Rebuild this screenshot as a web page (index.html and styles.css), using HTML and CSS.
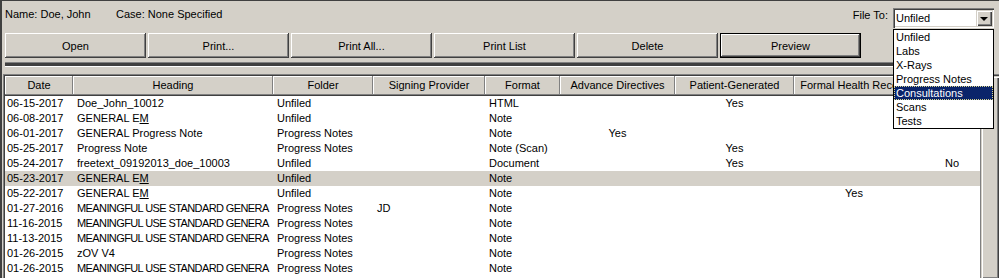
FILE: index.html
```html
<!DOCTYPE html>
<html lang="en">
<head>
    <meta charset="UTF-8">
    <title>Documents</title>
    <link rel="stylesheet" href="styles.css">
</head>
<body>
    <div class="window">
        <div class="info">
            <span class="name">Name: Doe, John</span>
            <span class="case">Case: None Specified</span>
            <div class="file_to">
                <span class="file_label">File To:</span>
                <div class="combo">
                    <span class="combo_value">Unfiled</span>
                    <span class="combo_arrow"><span class="tri"></span></span>
                    <ul class="combo_list">
                        <li>Unfiled</li>
                        <li>Labs</li>
                        <li>X-Rays</li>
                        <li>Progress Notes</li>
                        <li class="picked">Consultations</li>
                        <li>Scans</li>
                        <li>Tests</li>
                    </ul>
                </div>
            </div>
        </div>

        <div class="toolbar">
            <button class="btn">Open</button>
            <button class="btn">Print...</button>
            <button class="btn">Print All...</button>
            <button class="btn">Print List</button>
            <button class="btn">Delete</button>
            <button class="btn default">Preview</button>
        </div>

        <div class="separator"></div>

        <div class="list">
            <div class="grid">
                <div class="row head">
                    <span>Date</span><span>Heading</span><span>Folder</span><span>Signing Provider</span><span>Format</span><span>Advance Directives</span><span>Patient-Generated</span><span>Formal Health Record</span><span></span>
                </div>
                <div class="row">
                    <span>06-15-2017</span><span>Doe_John_10012</span><span>Unfiled</span><span></span><span>HTML</span><span></span><span class="c">Yes</span><span></span><span></span>
                </div>
                <div class="row">
                    <span>06-08-2017</span><span>GENERAL E<u>M</u></span><span>Unfiled</span><span></span><span>Note</span><span></span><span></span><span></span><span></span>
                </div>
                <div class="row">
                    <span>06-01-2017</span><span>GENERAL Progress Note</span><span>Progress Notes</span><span></span><span>Note</span><span class="c">Yes</span><span></span><span></span><span></span>
                </div>
                <div class="row">
                    <span>05-25-2017</span><span>Progress Note</span><span>Progress Notes</span><span></span><span>Note (Scan)</span><span></span><span class="c">Yes</span><span></span><span></span>
                </div>
                <div class="row">
                    <span>05-24-2017</span><span>freetext_09192013_doe_10003</span><span>Unfiled</span><span></span><span>Document</span><span></span><span class="c">Yes</span><span></span><span class="c">No</span>
                </div>
                <div class="row selected">
                    <span>05-23-2017</span><span>GENERAL E<u>M</u></span><span>Unfiled</span><span></span><span>Note</span><span></span><span></span><span></span><span></span>
                </div>
                <div class="row">
                    <span>05-22-2017</span><span>GENERAL E<u>M</u></span><span>Unfiled</span><span></span><span>Note</span><span></span><span></span><span class="c">Yes</span><span></span>
                </div>
                <div class="row">
                    <span>01-27-2016</span><span class="tight">MEANINGFUL USE STANDARD GENERA</span><span>Progress Notes</span><span>JD</span><span>Note</span><span></span><span></span><span></span><span></span>
                </div>
                <div class="row">
                    <span>11-16-2015</span><span class="tight">MEANINGFUL USE STANDARD GENERA</span><span>Progress Notes</span><span></span><span>Note</span><span></span><span></span><span></span><span></span>
                </div>
                <div class="row">
                    <span>11-13-2015</span><span class="tight">MEANINGFUL USE STANDARD GENERA</span><span>Progress Notes</span><span></span><span>Note</span><span></span><span></span><span></span><span></span>
                </div>
                <div class="row">
                    <span>01-26-2015</span><span>zOV V4</span><span>Progress Notes</span><span></span><span>Note</span><span></span><span></span><span></span><span></span>
                </div>
                <div class="row">
                    <span>01-26-2015</span><span class="tight">MEANINGFUL USE STANDARD GENERA</span><span>Progress Notes</span><span></span><span>Note</span><span></span><span></span><span></span><span></span>
                </div>
            </div>
            <div class="scrollbar"><div class="thumb"></div></div>
        </div>
    </div>
</body>
</html>
```

FILE: styles.css
```css
/* classic windows look: gray face, 3D edges drawn with inset shadows */
*{
    box-sizing: border-box;
}
html, body{
    margin: 0;
    height: 100%;
    overflow: hidden;
}
body{
    background-color: #d4d0c8;
    font-family: "Liberation Sans", Arial, sans-serif;
    font-size: 11px;
    color: #000;
}
.window{
    height: 100%;
    border-top: 1px solid #404040;
    border-left: 2px solid #404040;
}

/* top line: patient name, case and the File To combo */
.info{
    display: flex;
    align-items: flex-start;
    height: 31px;
    padding: 7px 0 0 3px;
    line-height: 13px;
}
.name{
    width: 111px;
}
.file_to{
    display: flex;
    align-items: flex-start;
    margin-left: auto;
    margin-right: 5px;
}
.file_label{
    margin: 1px 5px 0 0;
}
.combo{
    position: relative;
    display: flex;
    align-items: center;
    width: 101px;
    height: 20px;
    padding: 2px;
    background-color: #fff;
    box-shadow: inset 1px 1px #808080, inset 2px 2px #404040, inset -1px -1px #fff, inset -2px -2px #d4d0c8;
}
.combo_value{
    flex: 1;
    padding-left: 1px;
}
.combo_arrow{
    display: flex;
    align-items: center;
    justify-content: center;
    width: 16px;
    height: 16px;
    background-color: #d4d0c8;
    box-shadow: inset 1px 1px #d4d0c8, inset 2px 2px #fff, inset -1px -1px #404040, inset -2px -2px #808080;
}
.tri{
    width: 0;
    height: 0;
    border-left: 4px solid transparent;
    border-right: 4px solid transparent;
    border-top: 4px solid #000;
    margin-top: 1px;
}
.combo_list{
    /* the open drop-down lies over the buttons and the list */
    position: absolute;
    top: calc(100% + 1px);
    left: 0;
    width: 101px;
    margin: 0;
    padding: 0;
    list-style: none;
    background-color: #fff;
    border: 1px solid #000;
    z-index: 5;
}
.combo_list li{
    height: 14px;
    line-height: 14px;
    padding-left: 2px;
    white-space: nowrap;
}
.combo_list .picked{
    background-color: #0a246a;
    color: #fff;
    outline: 1px dotted #d8d48c;
    outline-offset: -1px;
}

/* button row */
.toolbar{
    display: flex;
    gap: 2px;
    margin-top: 1px;
    padding-left: 3px;
}
.btn{
    width: 141px;
    height: 25px;
    padding: 0;
    border: none;
    background-color: #d4d0c8;
    font-family: inherit;
    font-size: 11px;
    color: #000;
    box-shadow: inset -1px -1px #404040, inset 1px 1px #fff, inset -2px -2px #808080, inset 2px 2px #d4d0c8;
}
.btn.default{
    box-shadow: inset 0 0 0 1px #000, inset -2px -2px #404040, inset 2px 2px #fff, inset -3px -3px #808080;
}

.separator{
    height: 5px;
    margin: 4px 6px 0 3px;
    background-color: #404040;
    border-top: 1px solid #808080;
    border-bottom: 1px solid #fff;
}

/* sunken list view */
.list{
    display: flex;
    width: 998px;
    height: 205px;
    margin: 7px 0 0 1px;
    padding: 2px 2px 0 2px;
    background-color: #fff;
    box-shadow: inset 1px 1px #808080, inset 2px 2px #404040;
}
.grid{
    width: 975px;
    overflow: hidden;
}
.row{
    display: grid;
    grid-template-columns: 68px 200px 100px 112px 75px 115px 119px 120px 76px;
    width: 985px;
    height: 15px;
    line-height: 15px;
}
.row span{
    padding-left: 4px;
    white-space: nowrap;
    overflow: hidden;
}
.row span:first-child{
    padding-left: 2px;
}
.row .c{
    padding-left: 0;
    text-align: center;
}
.row .tight{
    letter-spacing: -0.6px;
}
.row.selected{
    background-color: #d4d0c8;
}
.row.head{
    height: 20px;
    line-height: 19px;
    background-color: #d4d0c8;
    box-shadow: inset 0 1px #fff, inset 0 -1px #404040, inset 0 -2px #808080;
}
.row.head span{
    padding-left: 0;
    text-align: center;
    box-shadow: inset -1px 0 #808080, inset 1px 0 #fff;
    height: 18px;
}

.scrollbar{
    width: 19px;
    background-color: #d4d0c8;
    border-left: 1px solid #808080;
}
.thumb{
    height: 100%;
    box-shadow: inset 1px 1px #d4d0c8, inset 2px 2px #fff, inset -1px -1px #404040, inset -2px -2px #808080;
}
```
